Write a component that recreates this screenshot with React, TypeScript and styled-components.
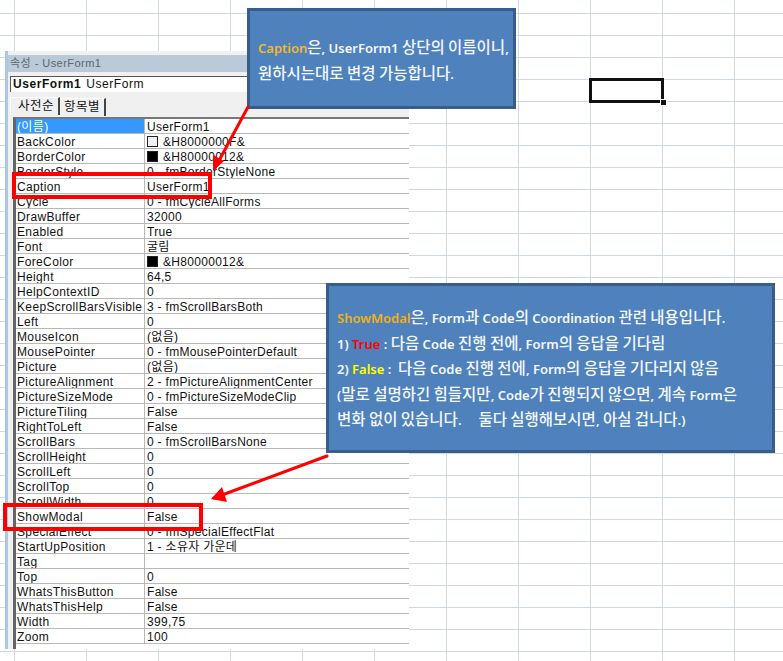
import React from "react";
import styled, { createGlobalStyle } from "styled-components";

const Global = createGlobalStyle`
  html, body { margin: 0; padding: 0; background: #fff; }
  body { width: 783px; height: 661px; overflow: hidden; }
`;

const Sheet = styled.div`
  position: relative;
  width: 783px;
  height: 661px;
  overflow: hidden;
  background-color: #fff;
  background-image:
    linear-gradient(to right, #d0d7e5 1px, transparent 1px),
    linear-gradient(to bottom, #d0d7e5 1px, transparent 1px);
  background-size: 72px 22px;
  background-position: 14px 13px;
`;

const SelectedCell = styled.div`
  position: absolute;
  left: 589px;
  top: 78px;
  width: 69px;
  height: 19px;
  border: 3px solid #111;
  &::after {
    content: "";
    position: absolute;
    right: -5px;
    bottom: -5px;
    width: 5px;
    height: 5px;
    background: #111;
    outline: 1px solid #fff;
  }
`;

const PropertyWindow = styled.section`
  position: absolute;
  left: 5px;
  top: 51px;
  width: 404px;
  height: 598px;
  box-sizing: border-box;
  display: flex;
  flex-direction: column;
  background: #f0f0f0;
  border-left: 3px solid #a9c8e8;
  font-family: "Liberation Sans", "Noto Sans CJK KR", sans-serif;
  font-size: 12px;
  color: #111;
`;

const TitleBar = styled.header`
  height: 17px;
  margin-top: 4px;
  padding-left: 2px;
  background: #bbcad9;
  color: #5a6670;
  font-size: 11px;
  letter-spacing: 0.45px;
  line-height: 17px;
`;

const ObjectBox = styled.div`
  height: 15px;
  margin: 4px 0 0 2px;
  padding-left: 2px;
  background: #fff;
  border-top: 1px solid #555;
  border-left: 1px solid #555;
  line-height: 15px;
  letter-spacing: 0.55px;
  color: #111;
  b { font-weight: 700; letter-spacing: 0.55px; margin-right: 5px; }
`;

const TabStrip = styled.div`
  display: flex;
  height: 19px;
  margin: 5px 0 0 2px;
`;

const Tab = styled.div<{ $active?: boolean }>`
  box-sizing: border-box;
  width: ${(p) => (p.$active ? 50 : 46)}px;
  height: 18px;
  padding-left: ${(p) => (p.$active ? 7 : 4)}px;
  border-right: 2px solid #444;
  border-left: ${(p) => (p.$active ? "1px solid #fff" : "none")};
  border-top: 1px solid #fff;
  line-height: 17px;
  font-size: 12.5px;
  letter-spacing: 0.5px;
  margin-top: ${(p) => (p.$active ? 0 : 1)}px;
`;

const GridFrame = styled.div`
  margin-left: 5px;
  margin-top: 1px;
  flex: 1;
  border-top: 2px solid #777;
  border-left: 3px solid #666;
  background: #fff;
`;

const Row = styled.div`
  display: grid;
  grid-template-columns: 129px 1fr;
  height: 15px;
  box-sizing: border-box;
  border-bottom: 1px solid #b8b8b8;
  line-height: 16px;
  white-space: nowrap;
  overflow: hidden;
`;

const NameCell = styled.div<{ $selected?: boolean }>`
  padding-left: 1px;
  border-right: 1px solid #b8b8b8;
  background: ${(p) => (p.$selected ? "#3399ff" : "transparent")};
  color: ${(p) => (p.$selected ? "#fff" : "#111")};
  letter-spacing: 0.36px;
`;

const ValueCell = styled.div`
  display: flex;
  align-items: flex-start;
  padding-left: 2px;
  letter-spacing: 0.3px;
`;

const Swatch = styled.span<{ $dark?: boolean }>`
  width: 9px;
  height: 9px;
  margin: 2px 5px 0 0;
  border: 1px solid #222;
  background: ${(p) => (p.$dark ? "#000" : "#f0f0f0")};
`;

const Callout = styled.aside<{ $left: number; $top: number; $width: number; $height: number }>`
  position: absolute;
  left: ${(p) => p.$left}px;
  top: ${(p) => p.$top}px;
  width: ${(p) => p.$width}px;
  height: ${(p) => p.$height}px;
  box-sizing: border-box;
  display: flex;
  flex-direction: column;
  justify-content: center;
  background: #4f81bd;
  border: 3px solid #385d8a;
  padding-left: 8px;
  color: #f4f8fc;
  font-family: "Noto Sans", sans-serif;
  font-size: 13px;
  font-weight: 600;
  white-space: pre;
`;

const CalloutLine = styled.div<{ $height: number }>`
  height: ${(p) => p.$height}px;
  line-height: ${(p) => p.$height}px;
`;

const Mark = styled.span<{ $color: string }>`
  color: ${(p) => p.$color};
`;

const Hangul = styled.span`
  font-family: "Noto Sans CJK KR", sans-serif;
  font-size: 15.5px;
  font-weight: 500;
`;

const Highlight = styled.div<{ $left: number; $top: number; $width: number; $height: number }>`
  position: absolute;
  left: ${(p) => p.$left}px;
  top: ${(p) => p.$top}px;
  width: ${(p) => p.$width}px;
  height: ${(p) => p.$height}px;
  box-sizing: border-box;
  border: 4px solid #ff0000;
`;

const ArrowLayer = styled.svg`
  position: absolute;
  left: 0;
  top: 0;
  pointer-events: none;
`;

function Mixed({ text }: { text: string }) {
  const parts = text.split(/([\uac00-\ud7a3]+)/);
  return (
    <>
      {parts.map((t, i) => (i % 2 ? <Hangul key={i}>{t}</Hangul> : t))}
    </>
  );
}

type Prop = { n: string; v: string; swatch?: "light" | "dark"; selected?: boolean };

const props: Prop[] = [
  { n: "(이름)", v: "UserForm1", selected: true },
  { n: "BackColor", v: "&H8000000F&", swatch: "light" },
  { n: "BorderColor", v: "&H80000012&", swatch: "dark" },
  { n: "BorderStyle", v: "0 - fmBorderStyleNone" },
  { n: "Caption", v: "UserForm1" },
  { n: "Cycle", v: "0 - fmCycleAllForms" },
  { n: "DrawBuffer", v: "32000" },
  { n: "Enabled", v: "True" },
  { n: "Font", v: "굴림" },
  { n: "ForeColor", v: "&H80000012&", swatch: "dark" },
  { n: "Height", v: "64,5" },
  { n: "HelpContextID", v: "0" },
  { n: "KeepScrollBarsVisible", v: "3 - fmScrollBarsBoth" },
  { n: "Left", v: "0" },
  { n: "MouseIcon", v: "(없음)" },
  { n: "MousePointer", v: "0 - fmMousePointerDefault" },
  { n: "Picture", v: "(없음)" },
  { n: "PictureAlignment", v: "2 - fmPictureAlignmentCenter" },
  { n: "PictureSizeMode", v: "0 - fmPictureSizeModeClip" },
  { n: "PictureTiling", v: "False" },
  { n: "RightToLeft", v: "False" },
  { n: "ScrollBars", v: "0 - fmScrollBarsNone" },
  { n: "ScrollHeight", v: "0" },
  { n: "ScrollLeft", v: "0" },
  { n: "ScrollTop", v: "0" },
  { n: "ScrollWidth", v: "0" },
  { n: "ShowModal", v: "False" },
  { n: "SpecialEffect", v: "0 - fmSpecialEffectFlat" },
  { n: "StartUpPosition", v: "1 - 소유자 가운데" },
  { n: "Tag", v: "" },
  { n: "Top", v: "0" },
  { n: "WhatsThisButton", v: "False" },
  { n: "WhatsThisHelp", v: "False" },
  { n: "Width", v: "399,75" },
  { n: "Zoom", v: "100" },
];

export default function App() {
  return (
    <Sheet>
      <Global />
      <SelectedCell />
      <PropertyWindow>
        <TitleBar>속성 - UserForm1</TitleBar>
        <ObjectBox>
          <b>UserForm1</b>UserForm
        </ObjectBox>
        <TabStrip>
          <Tab $active>사전순</Tab>
          <Tab>항목별</Tab>
        </TabStrip>
        <GridFrame>
          {props.map((p) => (
            <Row key={p.n}>
              <NameCell $selected={p.selected}>{p.n}</NameCell>
              <ValueCell>
                {p.swatch && <Swatch $dark={p.swatch === "dark"} />}
                {p.v}
              </ValueCell>
            </Row>
          ))}
        </GridFrame>
      </PropertyWindow>

      <Callout $left={247} $top={8} $width={269} $height={101}>
        <CalloutLine $height={26}>
          <Mark $color="#f2b927">Caption</Mark>
          <Mixed text="은, UserForm1 상단의 이름이니," />
        </CalloutLine>
        <CalloutLine $height={26}>
          <Mixed text="원하시는대로 변경 가능합니다." />
        </CalloutLine>
      </Callout>

      <Callout $left={326} $top={283} $width={449} $height={170}>
        <CalloutLine $height={25.5}>
          <Mark $color="#f2b10f">ShowModal</Mark>
          <Mixed text="은, Form과 Code의 Coordination 관련 내용입니다." />
        </CalloutLine>
        <CalloutLine $height={25.5}>
          1) <Mark $color="#ff0000">True</Mark> <Mixed text=": 다음 Code 진행 전에, Form의 응답을 기다림" />
        </CalloutLine>
        <CalloutLine $height={25.5}>
          2) <Mark $color="#ffff00">False</Mark> <Mixed text=":  다음 Code 진행 전에, Form의 응답을 기다리지 않음" />
        </CalloutLine>
        <CalloutLine $height={25.5}>
          <Mixed text="(말로 설명하긴 힘들지만, Code가 진행되지 않으면, 계속 Form은" />
        </CalloutLine>
        <CalloutLine $height={25.5}>
          <Mixed text="변화 없이 있습니다.     둘다 실행해보시면, 아실 겁니다.)" />
        </CalloutLine>
      </Callout>

      <Highlight $left={12} $top={172} $width={200} $height={27} />
      <Highlight $left={3} $top={503} $width={200} $height={28} />

      <ArrowLayer width="783" height="661" viewBox="0 0 783 661">
        <g stroke="#ff0000" strokeWidth="3" fill="none" strokeLinecap="round">
          <line x1="248" y1="107" x2="215" y2="168" />
          <line x1="327" y1="456" x2="214" y2="498" />
        </g>
        <polygon points="213,171 213,155 224,161" fill="#ff0000" />
        <polygon points="211,499 222,487 227,502" fill="#ff0000" />
      </ArrowLayer>
    </Sheet>
  );
}
